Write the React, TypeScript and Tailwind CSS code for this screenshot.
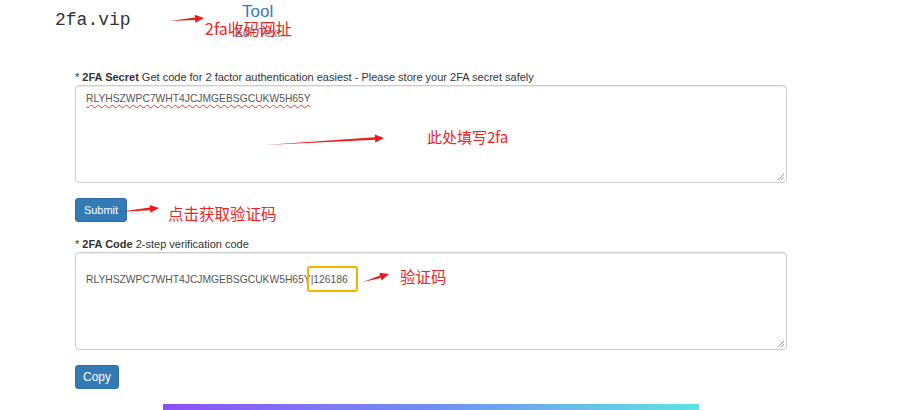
import React from "react";

const arial = { fontFamily: '"Liberation Sans", Arial, sans-serif' };
const cjk = { fontFamily: '"Noto Sans CJK SC", "Liberation Sans", sans-serif' };

function Arrows() {
  const arrows: [number, number, number, number][] = [
    [170, 21, 204, 18],
    [265, 145, 384, 138],
    [118, 212, 159, 208],
    [363, 282, 389, 274],
  ];
  return (
    <svg className="absolute left-0 top-0 pointer-events-none" width={900} height={410}>
      {arrows.map(([x1, y1, x2, y2], i) => {
        const dx = x2 - x1;
        const dy = y2 - y1;
        const len = Math.hypot(dx, dy);
        const ux = dx / len;
        const uy = dy / len;
        const px = -uy;
        const py = ux;
        const hl = 9;
        const hw = 4;
        const bx = x2 - ux * hl;
        const by = y2 - uy * hl;
        return (
          <g key={i} fill="#f01818">
            <polygon
              points={`${x1},${y1} ${bx + px * 1.3},${by + py * 1.3} ${bx - px * 1.3},${by - py * 1.3}`}
            />
            <polygon
              points={`${x2},${y2} ${bx + px * hw},${by + py * hw} ${bx - px * hw},${by - py * hw}`}
            />
          </g>
        );
      })}
    </svg>
  );
}

function Grip() {
  return (
    <svg className="absolute right-[1px] bottom-[1px]" width={9} height={9}>
      <line x1={8} y1={2} x2={2} y2={8} stroke="#999" strokeWidth={1} />
      <line x1={8} y1={5} x2={5} y2={8} stroke="#999" strokeWidth={1} />
    </svg>
  );
}

export default function App() {
  return (
    <div className="relative w-[900px] h-[410px] overflow-hidden bg-white" style={arial}>
      {/* header */}
      <div className="flex items-start h-[68px] pl-[55px]">
        <div
          className="text-[18px] leading-[20px] text-[#333] pt-[10px]"
          style={{ fontFamily: '"Liberation Mono", "DejaVu Sans Mono", monospace' }}
        >
          2fa.vip
        </div>
        <div className="ml-[95px] flex flex-col items-center w-[64px] pt-[2px]">
          <div className="text-[17px] leading-[19px] text-[#337ab7]">Tool</div>
          <div className="text-[12px] leading-[14px] text-[#777] mt-[5px]">Edit Text</div>
        </div>
      </div>

      {/* form */}
      <div className="pl-[75px] w-[787px] text-[11px] text-[#333]">
        <div className="leading-[14px] h-[14px] mt-[2px]">
          * <b>2FA Secret</b> Get code for 2 factor authentication easiest - Please store your 2FA secret safely
        </div>
        <div className="relative mt-[1px] h-[98px] border border-[#ccc] rounded-[4px] shadow-[inset_0_1px_1px_rgba(0,0,0,0.075)] px-[10px] pt-[5px] text-[10.3px] text-[#555] leading-[16px]">
          <span className="underline decoration-wavy decoration-[#e53935] decoration-1 underline-offset-2">
            RLYHSZWPC7WHT4JCJMGEBSGCUKW5H65Y
          </span>
          <Grip />
        </div>
        <button className="mt-[15px] h-[24px] w-[52px] bg-[#337ab7] border border-[#2e6da4] rounded-[3px] text-white text-[11px] leading-[22px] block">
          Submit
        </button>
        <div className="leading-[14px] h-[14px] mt-[15px]">
          * <b>2FA Code</b> 2-step verification code
        </div>
        <div className="relative mt-[1px] h-[98px] border border-[#ccc] rounded-[4px] shadow-[inset_0_1px_1px_rgba(0,0,0,0.075)] px-[10px] pt-[19px] text-[10.3px] text-[#555] leading-[16px]">
          <span>RLYHSZWPC7WHT4JCJMGEBSGCUKW5H65Y|126186</span>
          <Grip />
        </div>
        <button className="mt-[15px] h-[24px] w-[44px] bg-[#337ab7] border border-[#2e6da4] rounded-[3px] text-white text-[12px] leading-[22px] block">
          Copy
        </button>
      </div>

      <div className="mt-[15px] ml-[163px] w-[536px] h-[6px] bg-gradient-to-r from-[#8c4ff5] via-[#6f8ef0] to-[#5de3e0]" />

      {/* annotations */}
      <div className="absolute left-[307px] top-[266px] w-[51px] h-[26px] border-2 border-[#f5b400] rounded-[3px]" />
      <Arrows />
      <div className="absolute left-[205px] top-[18px] text-[16px] leading-[20px] text-[#f52020]" style={cjk}>
        2fa收码网址
      </div>
      <div className="absolute left-[427px] top-[127px] text-[15px] leading-[20px] text-[#f52020]" style={cjk}>
        此处填写2fa
      </div>
      <div className="absolute left-[168px] top-[203px] text-[15.5px] leading-[20px] text-[#f52020]" style={cjk}>
        点击获取验证码
      </div>
      <div className="absolute left-[400px] top-[266px] text-[15.5px] leading-[20px] text-[#f52020]" style={cjk}>
        验证码
      </div>
    </div>
  );
}
